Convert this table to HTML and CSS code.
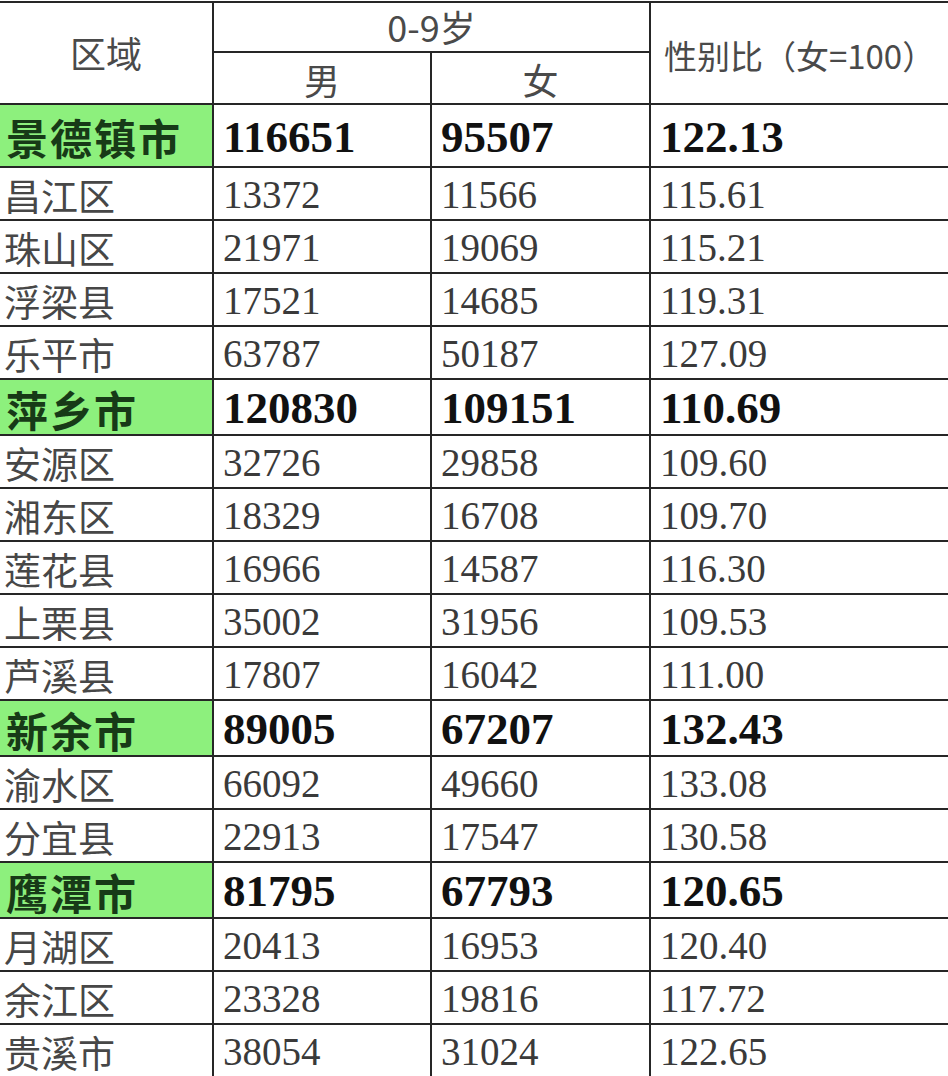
FILE: index.html
```html
<!DOCTYPE html>
<html lang="zh-CN">
<head>
<meta charset="utf-8">
<title>0-9岁性别比</title>
<link rel="stylesheet" href="styles.css">
</head>
<body>
<table class="stats">
  <colgroup>
    <col class="c-area"><col class="c-m"><col class="c-f"><col class="c-r">
  </colgroup>
  <thead>
    <tr class="h1">
      <th rowspan="2">区域</th>
      <th colspan="2">0-9岁</th>
      <th rowspan="2" class="ratio-h">性别比（女=100）</th>
    </tr>
    <tr class="h2">
      <th>男</th>
      <th>女</th>
    </tr>
  </thead>
  <tbody>
    <tr class="city first"><td class="name">景德镇市</td><td>116651</td><td>95507</td><td>122.13</td></tr>
    <tr class="dist"><td class="name">昌江区</td><td>13372</td><td>11566</td><td>115.61</td></tr>
    <tr class="dist"><td class="name">珠山区</td><td>21971</td><td>19069</td><td>115.21</td></tr>
    <tr class="dist"><td class="name">浮梁县</td><td>17521</td><td>14685</td><td>119.31</td></tr>
    <tr class="dist"><td class="name">乐平市</td><td>63787</td><td>50187</td><td>127.09</td></tr>
    <tr class="city"><td class="name">萍乡市</td><td>120830</td><td>109151</td><td>110.69</td></tr>
    <tr class="dist"><td class="name">安源区</td><td>32726</td><td>29858</td><td>109.60</td></tr>
    <tr class="dist"><td class="name">湘东区</td><td>18329</td><td>16708</td><td>109.70</td></tr>
    <tr class="dist"><td class="name">莲花县</td><td>16966</td><td>14587</td><td>116.30</td></tr>
    <tr class="dist"><td class="name">上栗县</td><td>35002</td><td>31956</td><td>109.53</td></tr>
    <tr class="dist"><td class="name">芦溪县</td><td>17807</td><td>16042</td><td>111.00</td></tr>
    <tr class="city"><td class="name">新余市</td><td>89005</td><td>67207</td><td>132.43</td></tr>
    <tr class="dist"><td class="name">渝水区</td><td>66092</td><td>49660</td><td>133.08</td></tr>
    <tr class="dist"><td class="name">分宜县</td><td>22913</td><td>17547</td><td>130.58</td></tr>
    <tr class="city"><td class="name">鹰潭市</td><td>81795</td><td>67793</td><td>120.65</td></tr>
    <tr class="dist"><td class="name">月湖区</td><td>20413</td><td>16953</td><td>120.40</td></tr>
    <tr class="dist"><td class="name">余江区</td><td>23328</td><td>19816</td><td>117.72</td></tr>
    <tr class="dist"><td class="name">贵溪市</td><td>38054</td><td>31024</td><td>122.65</td></tr>
  </tbody>
</table>
</body>
</html>
```

FILE: styles.css
```css
html, body {
  margin: 0;
  padding: 0;
  background: #ffffff;
}
body {
  padding-top: 1px;
  overflow: hidden;
}
.stats {
  border-collapse: collapse;
  table-layout: fixed;
  width: 948px;
  font-family: "Liberation Serif", "Noto Sans CJK SC", serif;
  color: #3a3a3a;
}
.c-area { width: 213px; }
.c-m { width: 218px; }
.c-f { width: 219px; }
.c-r { width: 298px; }

.stats th,
.stats td {
  border: 2px solid #262626;
  padding: 0;
  line-height: 1.1;
  vertical-align: middle;
}
.stats tr > :first-child { border-left: none; }
.stats tr > :last-child { border-right: none; }
.stats .h2 > :last-child { border-right: 2px solid #262626; }

.stats th {
  font-family: "Noto Sans CJK SC", sans-serif;
  font-weight: 400;
  font-size: 36px;
  color: #4a4a4a;
  text-align: center;
}
.h1 { height: 50px; }
.h2 { height: 52px; }
.h1 th { padding-top: 0; }
.h2 th { padding-top: 4px; }
.stats .ratio-h {
  font-size: 33px;
  letter-spacing: 0;
  padding-top: 4px;
}

.stats td {
  text-align: left;
  padding-left: 9px;
  padding-top: 4px;
  font-size: 39px;
}
.stats td.name {
  font-family: "Noto Sans CJK SC", sans-serif;
  padding-left: 4px;
  font-size: 37px;
  color: #474747;
}
.dist td { height: 47px; }
.city td {
  height: 50px;
  font-size: 45px;
  font-weight: 700;
  color: #111111;
}
.city.first td { height: 57px; }
.city td.name {
  background: #8df07d;
  color: #173a17;
  font-size: 42px;
  font-weight: 700;
  padding-left: 6px;
  letter-spacing: 2px;
}
```
